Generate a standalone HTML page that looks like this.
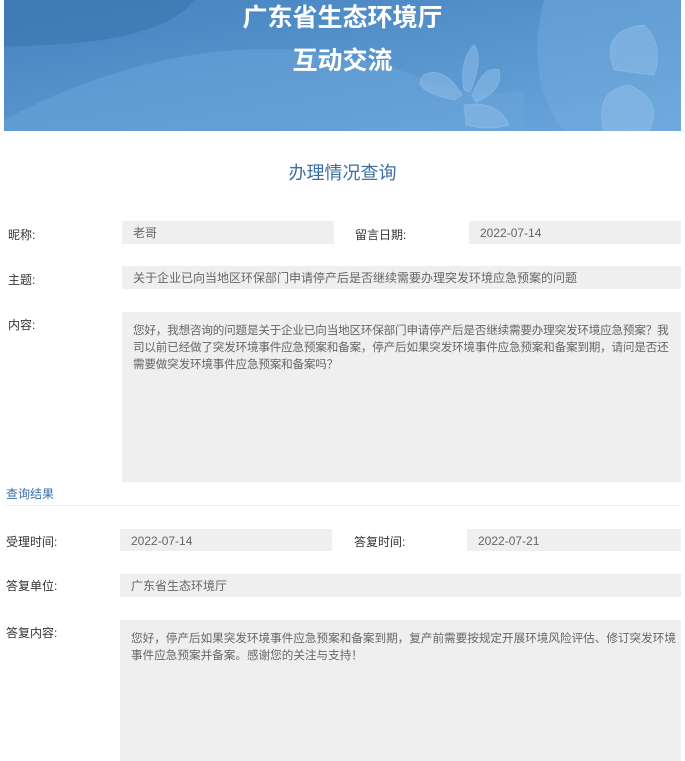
<!DOCTYPE html>
<html><head><meta charset="utf-8"><style>
*{margin:0;padding:0;box-sizing:border-box}
body{width:685px;height:761px;overflow:hidden;background:#fff;position:relative;font-family:"Liberation Sans","Noto Sans CJK SC",sans-serif;font-size:12px;color:#333}
.ban{position:absolute;left:4px;top:0;width:677px;height:131px;background:linear-gradient(170deg,#4582bf 0%,#5592cb 45%,#6aa6dc 100%);overflow:hidden}
.t{position:absolute;left:0;width:685px;text-align:center;color:#fff;font-weight:bold;font-size:25px;line-height:30px;font-family:"Noto Sans CJK SC",sans-serif}
.a{position:absolute;white-space:nowrap}
.b{position:absolute;background:#efefef;color:#666;padding-left:11px;padding-top:2px}
.c{font-size:11.6px;padding:10px 2px 0 11px;line-height:17px;white-space:normal}
</style></head><body>
<div class="ban">
<svg width="677" height="131" style="position:absolute;left:0;top:0">
<path d="M0 120 Q150 40 300 50 Q380 60 420 80 Q470 100 520 90 L520 131 L0 131Z" fill="#6aa6da" opacity=".5"/>
<path d="M0 0 L190 0 Q160 40 40 45 L0 47Z" fill="#3a74ae" opacity=".6"/>
<path d="M540 0 Q520 80 560 131 L677 131 L677 0Z" fill="#78b0e2" opacity=".4"/>
<g fill="#8dbde8" stroke="#9fc8ee" stroke-width="1" opacity=".55">
<path d="M450 100 Q405 90 420 75 Q440 65 458 95Z"/>
<path d="M460 90 Q455 60 470 45 Q480 58 466 92Z"/>
<path d="M468 95 Q480 65 495 70 Q500 90 472 102Z"/>
<path d="M460 105 Q495 100 505 125 Q485 131 462 125Z"/>
<path d="M610 70 Q595 30 640 25 Q660 45 650 75Z"/>
<path d="M600 131 Q590 90 625 85 Q660 100 645 131Z"/>
</g>
</svg>
</div>
<div class="t" style="top:1px">广东省生态环境厅</div>
<div class="t" style="top:44px">互动交流</div>
<div class="a" style="left:0;width:685px;text-align:center;top:159px;font-size:18px;color:#3b6ea5">办理情况查询</div>

<div class="a" style="left:8px;top:226px">昵称:</div>
<div class="b" style="left:122px;top:221px;width:212px;height:23px;line-height:21px">老哥</div>
<div class="a" style="left:355px;top:226px">留言日期:</div>
<div class="b" style="left:469px;top:221px;width:212px;height:23px;line-height:21px">2022-07-14</div>

<div class="a" style="left:8px;top:271px">主题:</div>
<div class="b" style="left:122px;top:266px;width:559px;height:23px;line-height:21px">关于企业已向当地区环保部门申请停产后是否继续需要办理突发环境应急预案的问题</div>

<div class="a" style="left:8px;top:316px">内容:</div>
<div class="b c" style="left:122px;top:312px;width:559px;height:170px;letter-spacing:-0.2px">您好，我想咨询的问题是关于企业已向当地区环保部门申请停产后是否继续需要办理突发环境应急预案？我司以前已经做了突发环境事件应急预案和备案，停产后如果突发环境事件应急预案和备案到期，请问是否还需要做突发环境事件应急预案和备案吗？</div>

<div class="a" style="left:6px;top:485px;color:#3b6ea5">查询结果</div>
<div class="a" style="left:6px;top:505px;width:675px;height:1px;background:#eee"></div>

<div class="a" style="left:6px;top:533px">受理时间:</div>
<div class="b" style="left:120px;top:529px;width:212px;height:22px;line-height:20px">2022-07-14</div>
<div class="a" style="left:354px;top:533px">答复时间:</div>
<div class="b" style="left:467px;top:529px;width:214px;height:22px;line-height:20px">2022-07-21</div>

<div class="a" style="left:6px;top:577px">答复单位:</div>
<div class="b" style="left:120px;top:574px;width:561px;height:23px;line-height:21px">广东省生态环境厅</div>

<div class="a" style="left:6px;top:624px">答复内容:</div>
<div class="b c" style="left:120px;top:620px;width:561px;height:141px;padding-right:2px">您好，停产后如果突发环境事件应急预案和备案到期，复产前需要按规定开展环境风险评估、修订突发环境事件应急预案并备案。感谢您的关注与支持！</div>
</body></html>
